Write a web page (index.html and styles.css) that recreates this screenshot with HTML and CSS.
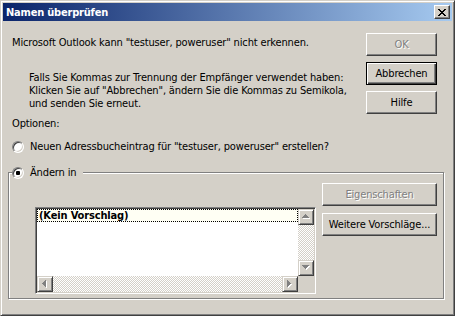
FILE: index.html
```html
<!DOCTYPE html>
<html lang="de">
<head>
<meta charset="utf-8">
<title>Namen überprüfen</title>
<link rel="stylesheet" href="styles.css">
</head>
<body>
<div class="window">
  <div class="titlebar">
    <span class="title">Namen überprüfen</span>
    <button class="close" aria-label="Schließen">
      <svg width="8" height="7" viewBox="0 0 8 7" shape-rendering="crispEdges"><path fill="#000" d="M0 0h2v1H0zM6 0h2v1H6zM1 1h2v1H1zM5 1h2v1H5zM2 2h4v1H2zM3 3h2v1H3zM2 4h4v1H2zM1 5h2v1H1zM5 5h2v1H5zM0 6h2v1H0zM6 6h2v1H6z"/></svg>
    </button>
  </div>
  <div class="body">
    <div class="top">
      <div class="msgs">
        <p class="msg">Microsoft Outlook kann "testuser, poweruser" nicht erkennen.</p>
        <p class="hint">Falls Sie Kommas zur Trennung der Empfänger verwendet haben:<br>Klicken Sie auf "Abbrechen", ändern Sie die Kommas zu Semikola,<br>und senden Sie erneut.</p>
      </div>
      <div class="btncol">
        <button class="btn disabled">OK</button>
        <button class="btn default">Abbrechen</button>
        <button class="btn">Hilfe</button>
      </div>
    </div>
    <p class="label">Optionen:</p>
    <div class="radio-row option"><span class="radio"></span><span>Neuen Adressbucheintrag für "testuser, poweruser" erstellen?</span></div>
    <fieldset class="group">
      <legend class="radio-row legend"><span class="radio checked"></span><span>Ändern in</span></legend>
      <div class="group-body">
        <div class="listbox">
          <div class="list-area">
            <div class="item">(Kein Vorschlag)</div>
          </div>
          <div class="vscroll">
            <span class="sbtn"><svg width="9" height="6" viewBox="0 0 9 6" shape-rendering="crispEdges"><path fill="#fff" d="M4 1h1v1H4zM3 2h3v1H3zM2 3h5v1H2zM1 4h7v1H1z"/><path fill="#808080" d="M3 0h1v1H3zM2 1h3v1H2zM1 2h5v1H1zM0 3h7v1H0z"/></svg></span>
            <span class="track"></span>
            <span class="sbtn"><svg width="9" height="6" viewBox="0 0 9 6" shape-rendering="crispEdges"><path fill="#fff" d="M1 1h7v1H1zM2 2h5v1H2zM3 3h3v1H3zM4 4h1v1H4z"/><path fill="#808080" d="M0 0h7v1H0zM1 1h5v1H1zM2 2h3v1H2zM3 3h1v1H3z"/></svg></span>
          </div>
          <div class="hscroll">
            <span class="sbtn"><svg width="6" height="9" viewBox="0 0 6 9" shape-rendering="crispEdges"><path fill="#fff" d="M1 4h1v1H1zM2 3h1v3H2zM3 2h1v5H3zM4 1h1v7H4z"/><path fill="#808080" d="M0 3h1v1H0zM1 2h1v3H1zM2 1h1v5H2zM3 0h1v7H3z"/></svg></span>
            <span class="track"></span>
            <span class="sbtn"><svg width="6" height="9" viewBox="0 0 6 9" shape-rendering="crispEdges"><path fill="#fff" d="M1 1h1v7H1zM2 2h1v5H2zM3 3h1v3H3zM4 4h1v1H4z"/><path fill="#808080" d="M0 0h1v7H0zM1 1h1v5H1zM2 2h1v3H2zM3 3h1v1H3z"/></svg></span>
          </div>
          <div class="corner"></div>
        </div>
        <div class="btncol wide">
          <button class="btn disabled">Eigenschaften</button>
          <button class="btn">Weitere Vorschläge...</button>
        </div>
      </div>
    </fieldset>
  </div>
</div>
</body>
</html>
```
FILE: styles.css
```css
* { box-sizing: border-box; }
html, body { margin: 0; padding: 0; background: #d4d0c8; }
body {
  font-family: "DejaVu Sans", Tahoma, sans-serif;
  font-stretch: condensed;
  font-size: 11px;
  letter-spacing: -0.15px;
  line-height: 13px;
  color: #000;
}
p { margin: 0; }

.window {
  width: 455px;
  height: 316px;
  background: #d4d0c8;
  border: 1px solid;
  border-color: #d4d0c8 #404040 #404040 #d4d0c8;
  box-shadow: inset 1px 1px #fff, inset -1px -1px #808080;
  padding: 2px;
  display: flex;
  flex-direction: column;
}

.titlebar {
  height: 18px;
  background: linear-gradient(to right, #0a246a, #a6caf0);
  display: flex;
  align-items: center;
  justify-content: space-between;
  padding: 0 2px 0 3px;
}
.title {
  color: #fff;
  font-weight: bold;
  letter-spacing: -0.2px;
}
.close {
  width: 16px;
  height: 14px;
  padding: 0;
  margin: 0;
  background: #d4d0c8;
  border: 1px solid;
  border-color: #fff #404040 #404040 #fff;
  box-shadow: inset -1px -1px #808080;
  display: flex;
  align-items: center;
  justify-content: center;
}
.close svg { display: block; }

.body {
  flex: 1;
  padding: 0 8px 0 5px;
  display: flex;
  flex-direction: column;
}

.top {
  display: flex;
  justify-content: space-between;
  margin-top: 12px;
  padding: 0 7px 0 4px;
}
.msg { margin-top: 3px; }
.hint { margin-top: 22px; margin-left: 17px; }

.btncol {
  display: flex;
  flex-direction: column;
  gap: 6px;
  width: 71px;
}
.btncol.wide { width: 115px; gap: 7px; margin-top: 4px; }

.btn {
  font: inherit;
  letter-spacing: inherit;
  height: 23px;
  padding: 0;
  margin: 0;
  color: #000;
  background: #d4d0c8;
  border: 1px solid;
  border-color: #fff #404040 #404040 #fff;
  box-shadow: inset -1px -1px #808080;
  text-align: center;
}
.btn.default {
  border-color: #000;
  box-shadow: inset 1px 1px #fff, inset -1px -1px #404040, inset -2px -2px #808080;
}
.btn.disabled {
  color: #808080;
  text-shadow: 1px 1px #fff;
}

.label { margin: 3px 0 0 4px; }

.radio-row {
  display: flex;
  align-items: center;
  gap: 6px;
  height: 13px;
}
.option { margin: 10px 0 0 4px; }

.radio {
  width: 12px;
  height: 12px;
  flex: none;
  border-radius: 50%;
  border: 1px solid;
  border-color: #808080 #fff #fff #808080;
  background: #fff;
  box-shadow: inset 1px 1px #404040, inset -1px -1px #d4d0c8;
}
.radio.checked {
  background: radial-gradient(circle at 50% 50%, #000 0 2px, #fff 2.5px);
}

.group {
  margin: 13px 0 0 0;
  padding: 0 6px 4px 0;
  min-inline-size: 0;
  border: 1px solid #808080;
  box-shadow: inset 1px 1px #fff, 1px 1px #fff;
}
.legend {
  margin-left: 3px;
  padding: 0 7px 0 0;
  background: #d4d0c8;
}

.group-body {
  display: flex;
  justify-content: space-between;
  align-items: flex-start;
  padding-left: 26px;
}

.listbox {
  width: 281px;
  height: 87px;
  margin-top: 28px;
  border: 1px solid;
  border-color: #808080 #fff #fff #808080;
  box-shadow: inset 1px 1px #404040, inset -1px -1px #d4d0c8;
  padding: 1px;
  display: grid;
  grid-template-columns: 1fr 16px;
  grid-template-rows: 1fr 16px;
}
.list-area { background: #fff; }
.item {
  height: 13px;
  line-height: 11px;
  border: 1px dotted #000;
  font-weight: bold;
  padding-left: 1px;
  background: #fffff4;
}

.vscroll, .hscroll { display: flex; }
.vscroll { flex-direction: column; }
.track {
  flex: 1;
  background: repeating-conic-gradient(#fff 0 25%, #d4d0c8 0 50%) 0 0 / 2px 2px;
}
.sbtn {
  width: 16px;
  height: 16px;
  flex: none;
  background: #d4d0c8;
  border: 1px solid;
  border-color: #d4d0c8 #404040 #404040 #d4d0c8;
  box-shadow: inset 1px 1px #fff, inset -1px -1px #808080;
  display: flex;
  align-items: center;
  justify-content: center;
}
.sbtn svg { display: block; }
.corner { background: #d4d0c8; }
```
